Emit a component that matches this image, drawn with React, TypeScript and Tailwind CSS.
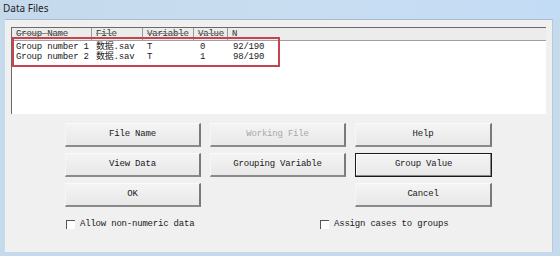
import React from "react";

const mono = { fontFamily: '"Liberation Mono", "Noto Sans CJK SC", monospace' };

function Btn({ label, disabled, active }: { label: string; disabled?: boolean; active?: boolean }) {
  return (
    <div
      className={
        "h-[24px] flex items-center justify-center text-[9px] tracking-[-0.2px] bg-gradient-to-b from-[#f4f4f4] to-[#e8e8e8] " +
        (active
          ? "border border-[#1a1a1a] shadow-[inset_-1px_-1px_0_#8a8a8a,inset_1px_1px_0_#ffffff]"
          : "border-t border-l border-t-[#fafafa] border-l-[#f6f6f6] border-r-2 border-b-2 border-r-[#7a7a7a] border-b-[#8a8a8a]") +
        (disabled ? " text-[#a8a8a8]" : " text-[#1a1a1a]")
      }
      style={mono}
    >
      {label}
    </div>
  );
}

function Check({ label }: { label: string }) {
  return (
    <div className="flex items-center gap-[5px] text-[9px] tracking-[-0.2px] text-[#1a1a1a]" style={mono}>
      <div className="w-[9px] h-[9px] bg-white border-t border-l border-[#555] border-r-[#eee] border-b-[#eee]" />
      <span>{label}</span>
    </div>
  );
}

export default function App() {
  const rows = [
    ["Group number 1", "数据.sav", "T", "0", "92/190"],
    ["Group number 2", "数据.sav", "T", "1", "98/190"],
  ];
  const cols = "grid grid-cols-[80px_51px_51px_34px_1fr]";
  return (
    <div className="w-[560px] h-[256px] bg-[#c6daee] flex flex-col overflow-hidden">
      <div
        className="h-[19px] shrink-0 flex items-center pl-[3px] pb-[3px] text-[10px] text-[#1e1e1e] bg-gradient-to-r from-[#c5d9ed] via-[#c9ddf1] to-[#c3dcf5]"
        style={{ fontFamily: '"Noto Sans", "Open Sans", sans-serif' }}
      >
        Data Files
      </div>
      <div className="ml-[5px] mr-[7px] h-[233px] bg-[#f0f0f0] border-t border-[#a9bcd0] border-r border-r-[#b8c8d8] flex flex-col px-[6px] pt-[7px]">
        {/* list box */}
        <div className="relative h-[87px] bg-white border-t border-l border-[#6a6a6a] border-r-[#9a9a9a] border-b-[#e4e4e4] overflow-hidden">
          <div className={cols + " h-[13px] bg-[#ececec] border-b border-[#a0a0a0] text-[9px] tracking-[-0.2px] text-[#333]"} style={mono}>
            {["Group Name", "File", "Variable", "Value", "N"].map((h, i) => (
              <div key={i} className={"pl-[4px] leading-[12px] line-through decoration-[#8a8a8a] " + (i < 4 ? "border-r border-[#9a9a9a]" : "")}>
                {h}
              </div>
            ))}
          </div>
          <div className="pt-[1px] text-[9px] tracking-[-0.2px] text-[#1a1a1a]" style={mono}>
            {rows.map((r, ri) => (
              <div key={ri} className={cols + " h-[10px] leading-[10px]"}>
                <div className="pl-[4px]">{r[0]}</div>
                <div className="pl-[4px]">{r[1]}</div>
                <div className="pl-[4px]">{r[2]}</div>
                <div className="pl-[6px]">{r[3]}</div>
                <div className="pl-[5px]">{r[4]}</div>
              </div>
            ))}
          </div>
          <div className="absolute left-0 top-[9px] w-[268px] h-[30px] border-2 border-[#c4454f]" />
        </div>
        {/* buttons */}
        <div className="ml-[54px] mt-[9px] grid grid-cols-[136px_136px_137px] gap-x-[9px] gap-y-[6px] w-[427px]">
          <Btn label="File Name" />
          <Btn label="Working File" disabled />
          <Btn label="Help" />
          <Btn label="View Data" />
          <Btn label="Grouping Variable" />
          <Btn label="Group Value" active />
          <Btn label="OK" />
          <div />
          <Btn label="Cancel" />
        </div>
        <div className="ml-[55px] mt-[11px] flex">
          <div className="w-[254px]">
            <Check label="Allow non-numeric data" />
          </div>
          <Check label="Assign cases to groups" />
        </div>
      </div>
    </div>
  );
}
